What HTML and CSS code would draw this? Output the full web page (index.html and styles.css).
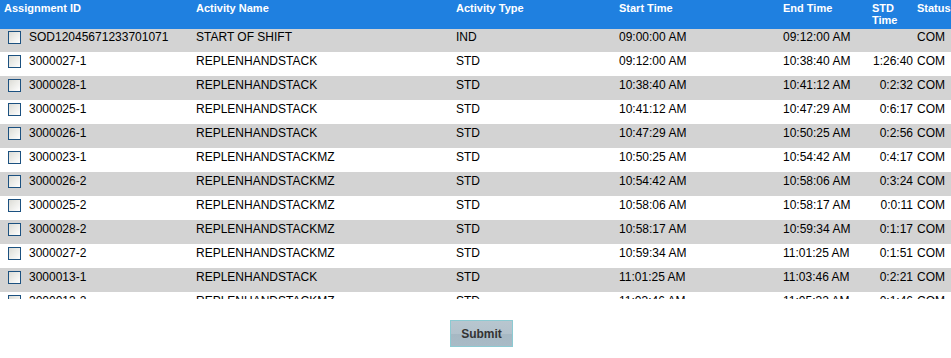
FILE: index.html
```html
<!DOCTYPE html>
<html>
<head>
<meta charset="utf-8">
<link rel="stylesheet" href="styles.css">
</head>
<body>
<div class="grid-wrap">
<table class="grid">
<colgroup>
<col class="c-id"><col class="c-name"><col class="c-type"><col class="c-start"><col class="c-end"><col class="c-std"><col class="c-status">
</colgroup>
<thead>
<tr><th>Assignment ID</th><th>Activity Name</th><th>Activity Type</th><th>Start Time</th><th>End Time</th><th>STD Time</th><th>Status</th></tr>
</thead>
<tbody>
<tr class="alt"><td><div class="idc"><span class="cb"></span><span>SOD12045671233701071</span></div></td><td>START OF SHIFT</td><td>IND</td><td>09:00:00 AM</td><td>09:12:00 AM</td><td class="std"></td><td>COM</td></tr>
<tr><td><div class="idc"><span class="cb"></span><span>3000027-1</span></div></td><td>REPLENHANDSTACK</td><td>STD</td><td>09:12:00 AM</td><td>10:38:40 AM</td><td class="std">1:26:40</td><td>COM</td></tr>
<tr class="alt"><td><div class="idc"><span class="cb"></span><span>3000028-1</span></div></td><td>REPLENHANDSTACK</td><td>STD</td><td>10:38:40 AM</td><td>10:41:12 AM</td><td class="std">0:2:32</td><td>COM</td></tr>
<tr><td><div class="idc"><span class="cb"></span><span>3000025-1</span></div></td><td>REPLENHANDSTACK</td><td>STD</td><td>10:41:12 AM</td><td>10:47:29 AM</td><td class="std">0:6:17</td><td>COM</td></tr>
<tr class="alt"><td><div class="idc"><span class="cb"></span><span>3000026-1</span></div></td><td>REPLENHANDSTACK</td><td>STD</td><td>10:47:29 AM</td><td>10:50:25 AM</td><td class="std">0:2:56</td><td>COM</td></tr>
<tr><td><div class="idc"><span class="cb"></span><span>3000023-1</span></div></td><td>REPLENHANDSTACKMZ</td><td>STD</td><td>10:50:25 AM</td><td>10:54:42 AM</td><td class="std">0:4:17</td><td>COM</td></tr>
<tr class="alt"><td><div class="idc"><span class="cb"></span><span>3000026-2</span></div></td><td>REPLENHANDSTACKMZ</td><td>STD</td><td>10:54:42 AM</td><td>10:58:06 AM</td><td class="std">0:3:24</td><td>COM</td></tr>
<tr><td><div class="idc"><span class="cb"></span><span>3000025-2</span></div></td><td>REPLENHANDSTACKMZ</td><td>STD</td><td>10:58:06 AM</td><td>10:58:17 AM</td><td class="std">0:0:11</td><td>COM</td></tr>
<tr class="alt"><td><div class="idc"><span class="cb"></span><span>3000028-2</span></div></td><td>REPLENHANDSTACKMZ</td><td>STD</td><td>10:58:17 AM</td><td>10:59:34 AM</td><td class="std">0:1:17</td><td>COM</td></tr>
<tr><td><div class="idc"><span class="cb"></span><span>3000027-2</span></div></td><td>REPLENHANDSTACKMZ</td><td>STD</td><td>10:59:34 AM</td><td>11:01:25 AM</td><td class="std">0:1:51</td><td>COM</td></tr>
<tr class="alt"><td><div class="idc"><span class="cb"></span><span>3000013-1</span></div></td><td>REPLENHANDSTACK</td><td>STD</td><td>11:01:25 AM</td><td>11:03:46 AM</td><td class="std">0:2:21</td><td>COM</td></tr>
<tr><td><div class="idc"><span class="cb"></span><span>3000013-2</span></div></td><td>REPLENHANDSTACKMZ</td><td>STD</td><td>11:03:46 AM</td><td>11:05:32 AM</td><td class="std">0:1:46</td><td>COM</td></tr>
</tbody>
</table>
</div>
<div class="actions">
<button class="submit" type="button">Submit</button>
</div>
</body>
</html>
```
FILE: styles.css
```css
html, body {
  margin: 0;
  padding: 0;
  background: #ffffff;
}
body {
  font-family: "Liberation Sans", Arial, sans-serif;
  color: #000;
}
.grid-wrap {
  width: 951px;
  height: 299px;
  overflow: hidden;
}
.grid {
  width: 951px;
  table-layout: fixed;
  border-collapse: collapse;
  border-spacing: 0;
}
.c-id { width: 192px; }
.c-name { width: 260px; }
.c-type { width: 163px; }
.c-start { width: 164px; }
.c-end { width: 89px; }
.c-std { width: 45px; }
.c-status { width: 38px; }

.grid th {
  background: #1f80e0;
  color: #ffffff;
  font-weight: bold;
  font-size: 11px;
  line-height: 12px;
  text-align: left;
  vertical-align: top;
  padding: 2px 0 0 4px;
  height: 29px;
  box-sizing: border-box;
  white-space: normal;
  overflow: hidden;
}
.grid td {
  font-size: 12px;
  line-height: 13px;
  vertical-align: top;
  padding: 3px 0 0 4px;
  height: 24px;
  box-sizing: border-box;
  white-space: nowrap;
  overflow: hidden;
}
.grid tbody tr:first-child td {
  height: 23px;
  padding-top: 2px;
}
.grid tr.alt td {
  background: #d3d3d3;
}
.grid td.std {
  text-align: right;
}
.idc {
  display: flex;
  align-items: flex-start;
  padding-left: 4px;
}
.cb {
  display: block;
  flex: none;
  width: 13px;
  height: 13px;
  box-sizing: border-box;
  border: 1px solid #1c5180;
  background: linear-gradient(135deg, #dcdcd6 0%, #f4f4f2 70%, #ffffff 100%);
  margin-right: 8px;
}
.actions {
  padding: 21px 0 0 450px;
}
.submit {
  display: block;
  width: 63px;
  height: 27px;
  padding: 0;
  margin: 0;
  border: 1px solid #8ccad2;
  background: linear-gradient(to bottom, #b8c6cf 0%, #b3c2cc 50%, #a6b8c3 52%, #a9bbc6 100%);
  font-family: "Liberation Sans", Arial, sans-serif;
  font-weight: bold;
  font-size: 12px;
  color: #333333;
  text-align: center;
}
```
